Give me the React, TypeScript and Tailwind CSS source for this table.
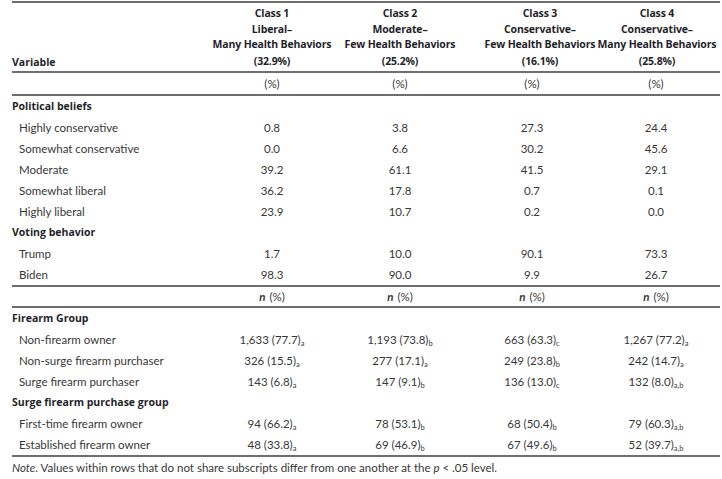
import React from 'react';

type Cell = { v: string; sub?: string };

const classes = [
  { name: 'Class 1', kind: 'Liberal–', beh: 'Many Health Behaviors', pct: '(32.9%)' },
  { name: 'Class 2', kind: 'Moderate–', beh: 'Few Health Behaviors', pct: '(25.2%)' },
  { name: 'Class 3', kind: 'Conservative–', beh: 'Few Health Behaviors', pct: '(16.1%)' },
  { name: 'Class 4', kind: 'Conservative–', beh: 'Many Health Behaviors', pct: '(25.8%)' },
];

const c = (v: string, sub?: string): Cell => ({ v, sub });

const political: [string, Cell[]][] = [
  ['Highly conservative', [c('0.8'), c('3.8'), c('27.3'), c('24.4')]],
  ['Somewhat conservative', [c('0.0'), c('6.6'), c('30.2'), c('45.6')]],
  ['Moderate', [c('39.2'), c('61.1'), c('41.5'), c('29.1')]],
  ['Somewhat liberal', [c('36.2'), c('17.8'), c('0.7'), c('0.1')]],
  ['Highly liberal', [c('23.9'), c('10.7'), c('0.2'), c('0.0')]],
];

const voting: [string, Cell[]][] = [
  ['Trump', [c('1.7'), c('10.0'), c('90.1'), c('73.3')]],
  ['Biden', [c('98.3'), c('90.0'), c('9.9'), c('26.7')]],
];

const firearm: [string, Cell[]][] = [
  ['Non-firearm owner', [c('1,633 (77.7)', 'a'), c('1,193 (73.8)', 'b'), c('663 (63.3)', 'c'), c('1,267 (77.2)', 'a')]],
  ['Non-surge firearm purchaser', [c('326 (15.5)', 'a'), c('277 (17.1)', 'a'), c('249 (23.8)', 'b'), c('242 (14.7)', 'a')]],
  ['Surge firearm purchaser', [c('143 (6.8)', 'a'), c('147 (9.1)', 'b'), c('136 (13.0)', 'c'), c('132 (8.0)', 'a,b')]],
];

const surge: [string, Cell[]][] = [
  ['First-time firearm owner', [c('94 (66.2)', 'a'), c('78 (53.1)', 'b'), c('68 (50.4)', 'b'), c('79 (60.3)', 'a,b')]],
  ['Established firearm owner', [c('48 (33.8)', 'a'), c('69 (46.9)', 'b'), c('67 (49.6)', 'b'), c('52 (39.7)', 'a,b')]],
];

const grid = 'grid grid-cols-[198px_124px_132px_132px_116px]';
// the header row is centred a little to the right for the last two classes
const headGrid = 'grid grid-cols-[198px_124px_132px_148px_86px]';
// bold headings in the source use a wider face than the body text
const heading = "font-['Open_Sans',sans-serif] font-bold text-[10.5px] text-[#1f1f2a]";

const Rule = () => <div className="h-[2px] w-full bg-[#6e6e6e]" />;

const Section = ({ title }: { title: string }) => (
  <div className={`${grid} h-[21px] items-center`}>
    <div className={`${heading} whitespace-nowrap`}>{title}</div>
  </div>
);

const DataRow = ({ label, cells }: { label: string; cells: Cell[] }) => (
  <div className={`${grid} h-[21px] items-center`}>
    <div className="pl-[7px] whitespace-nowrap">{label}</div>
    {cells.map((cell, i) => (
      <div key={i} className="flex justify-center whitespace-nowrap">
        <span>
          {cell.v}
          {cell.sub && <sub className="text-[7.5px] leading-none">{cell.sub}</sub>}
        </span>
      </div>
    ))}
  </div>
);

const UnitRow = ({ n }: { n?: boolean }) => (
  <div className={`${grid} items-center`}>
    <div />
    {classes.map((k) => (
      <div key={k.name} className="flex justify-center whitespace-nowrap">
        {n && <span className="font-bold italic mr-[4px]">n</span>}
        (%)
      </div>
    ))}
  </div>
);

export default function App() {
  return (
    <div className="w-[722px] h-[479px] bg-white font-['Lato','Liberation_Sans',sans-serif] text-[11.5px] text-[#383838] leading-none">
      <div className="ml-[12px] w-[708px] pt-px">
        <Rule />
        <div className={`${headGrid} h-[68px]`}>
          <div className={`${heading} flex items-end pb-[4px]`}>Variable</div>
          {classes.map((k) => (
            <div key={k.name} className={`${heading} flex flex-col items-center pt-[3px] whitespace-nowrap tracking-[-0.15px]`}>
              <div className="leading-[15.5px]">{k.name}</div>
              <div className="leading-[15.5px]">{k.kind}</div>
              <div className="leading-[15.5px]">{k.beh}</div>
              <div className="mt-[1px] leading-[15.5px]">{k.pct}</div>
            </div>
          ))}
        </div>
        <Rule />
        <div className="h-[21px] flex flex-col justify-center">
          <UnitRow />
        </div>
        <Rule />
        <Section title="Political beliefs" />
        {political.map(([l, cells]) => (
          <DataRow key={l} label={l} cells={cells} />
        ))}
        <Section title="Voting behavior" />
        {voting.map(([l, cells]) => (
          <DataRow key={l} label={l} cells={cells} />
        ))}
        <Rule />
        <div className="h-[19px] flex flex-col justify-center">
          <UnitRow n />
        </div>
        <Rule />
        <Section title="Firearm Group" />
        {firearm.map(([l, cells]) => (
          <DataRow key={l} label={l} cells={cells} />
        ))}
        <Section title="Surge firearm purchase group" />
        {surge.map(([l, cells]) => (
          <DataRow key={l} label={l} cells={cells} />
        ))}
        <Rule />
        <div className="h-[21px] flex items-center whitespace-nowrap">
          <span>
            <i>Note</i>. Values within rows that do not share subscripts differ from one another at the <i>p</i> &lt; .05 level.
          </span>
        </div>
      </div>
    </div>
  );
}
